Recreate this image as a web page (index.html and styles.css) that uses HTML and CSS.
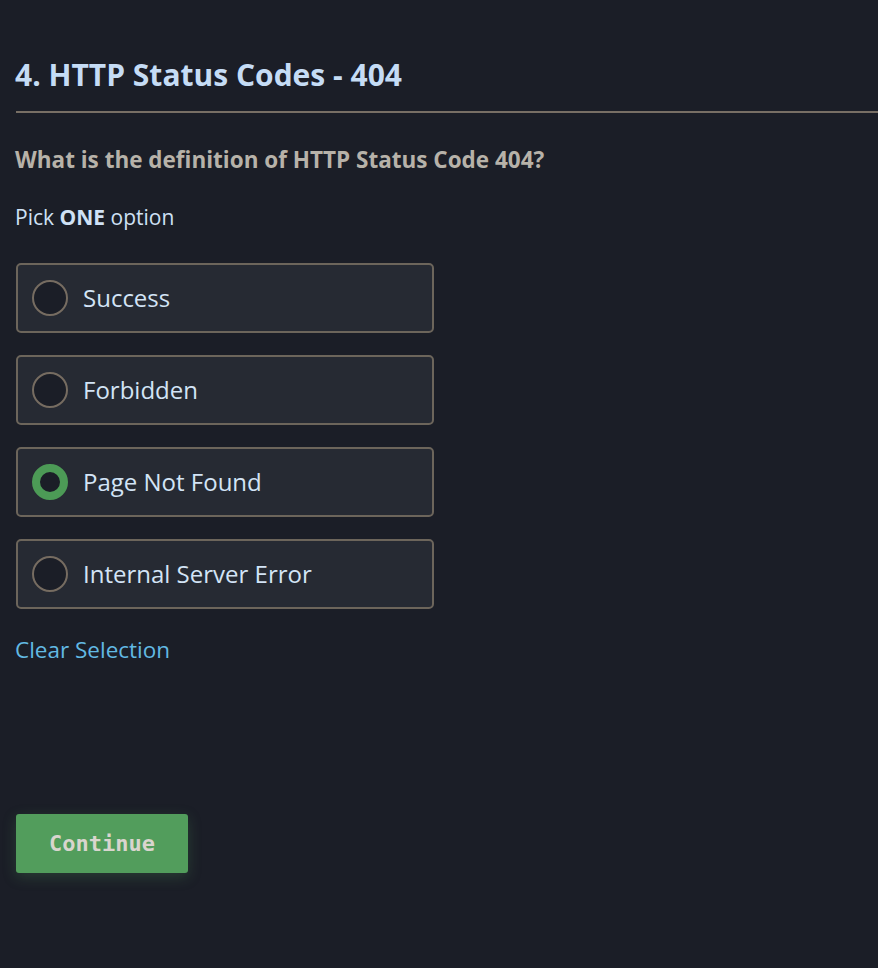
FILE: index.html
```html
<!DOCTYPE html>
<html lang="en">
<head>
<meta charset="utf-8">
<title>HTTP Status Codes - 404</title>
<link rel="stylesheet" href="styles.css">
</head>
<body>
<main class="quiz">
  <h1 class="title">4. HTTP Status Codes - 404</h1>
  <hr class="rule">
  <p class="question">What is the definition of HTTP Status Code 404?</p>
  <p class="hint">Pick <b>ONE</b> option</p>
  <div class="options">
    <label class="option"><span class="radio"></span><span class="label">Success</span></label>
    <label class="option"><span class="radio"></span><span class="label">Forbidden</span></label>
    <label class="option"><span class="radio selected"></span><span class="label">Page Not Found</span></label>
    <label class="option"><span class="radio"></span><span class="label">Internal Server Error</span></label>
  </div>
  <a class="clear">Clear Selection</a>
  <button class="continue">Continue</button>
</main>
</body>
</html>
```
FILE: styles.css
```css
html, body {
  margin: 0;
  padding: 0;
  background: #1b1e27;
}
body {
  font-family: "Open Sans", "Noto Sans", sans-serif;
  width: 878px;
  height: 968px;
  overflow: hidden;
}
.quiz {
  padding: 0 0 0 15px;
  display: flex;
  flex-direction: column;
  align-items: flex-start;
}
.title {
  margin: 55px 0 0 0;
  font-size: 30px;
  line-height: 40px;
  font-weight: 700;
  color: #c5dcf5;
}
.rule {
  align-self: stretch;
  margin: 16px 0 0 1px;
  border: 0;
  height: 2px;
  background: #786f65;
}
.question {
  margin: 33px 0 0 0;
  font-size: 22.5px;
  line-height: 28px;
  font-weight: 700;
  color: #b7b2a9;
}
.hint {
  margin: 30px 0 0 0;
  font-size: 21px;
  line-height: 26px;
  color: #cfe1f5;
}
.hint b {
  font-weight: 700;
}
.options {
  margin-top: 33px;
  margin-left: 1px;
  display: flex;
  flex-direction: column;
  gap: 22px;
}
.option {
  box-sizing: border-box;
  width: 418px;
  height: 70px;
  border: 2px solid #6c655b;
  border-radius: 5px;
  background: #262a33;
  display: flex;
  align-items: center;
  padding-left: 14px;
  gap: 15px;
}
.radio {
  box-sizing: border-box;
  width: 36px;
  height: 36px;
  border-radius: 50%;
  border: 2px solid #766c61;
  background: #1b1e27;
}
.radio.selected {
  border: 8px solid #4c9a56;
}
.label {
  font-size: 24px;
  line-height: 32px;
  color: #d3e4f6;
}
.clear {
  margin-top: 26px;
  font-size: 22.5px;
  line-height: 30px;
  color: #62b9e3;
  cursor: pointer;
}
.continue {
  margin-top: 149px;
  margin-left: 1px;
  width: 172px;
  height: 59px;
  border: 0;
  border-radius: 3px;
  background: #529d5c;
  color: #d9d5ce;
  font-family: "DejaVu Sans Mono", monospace;
  font-weight: 700;
  font-size: 22px;
  box-shadow: 0 4px 14px rgba(82, 157, 92, 0.25);
}
```
